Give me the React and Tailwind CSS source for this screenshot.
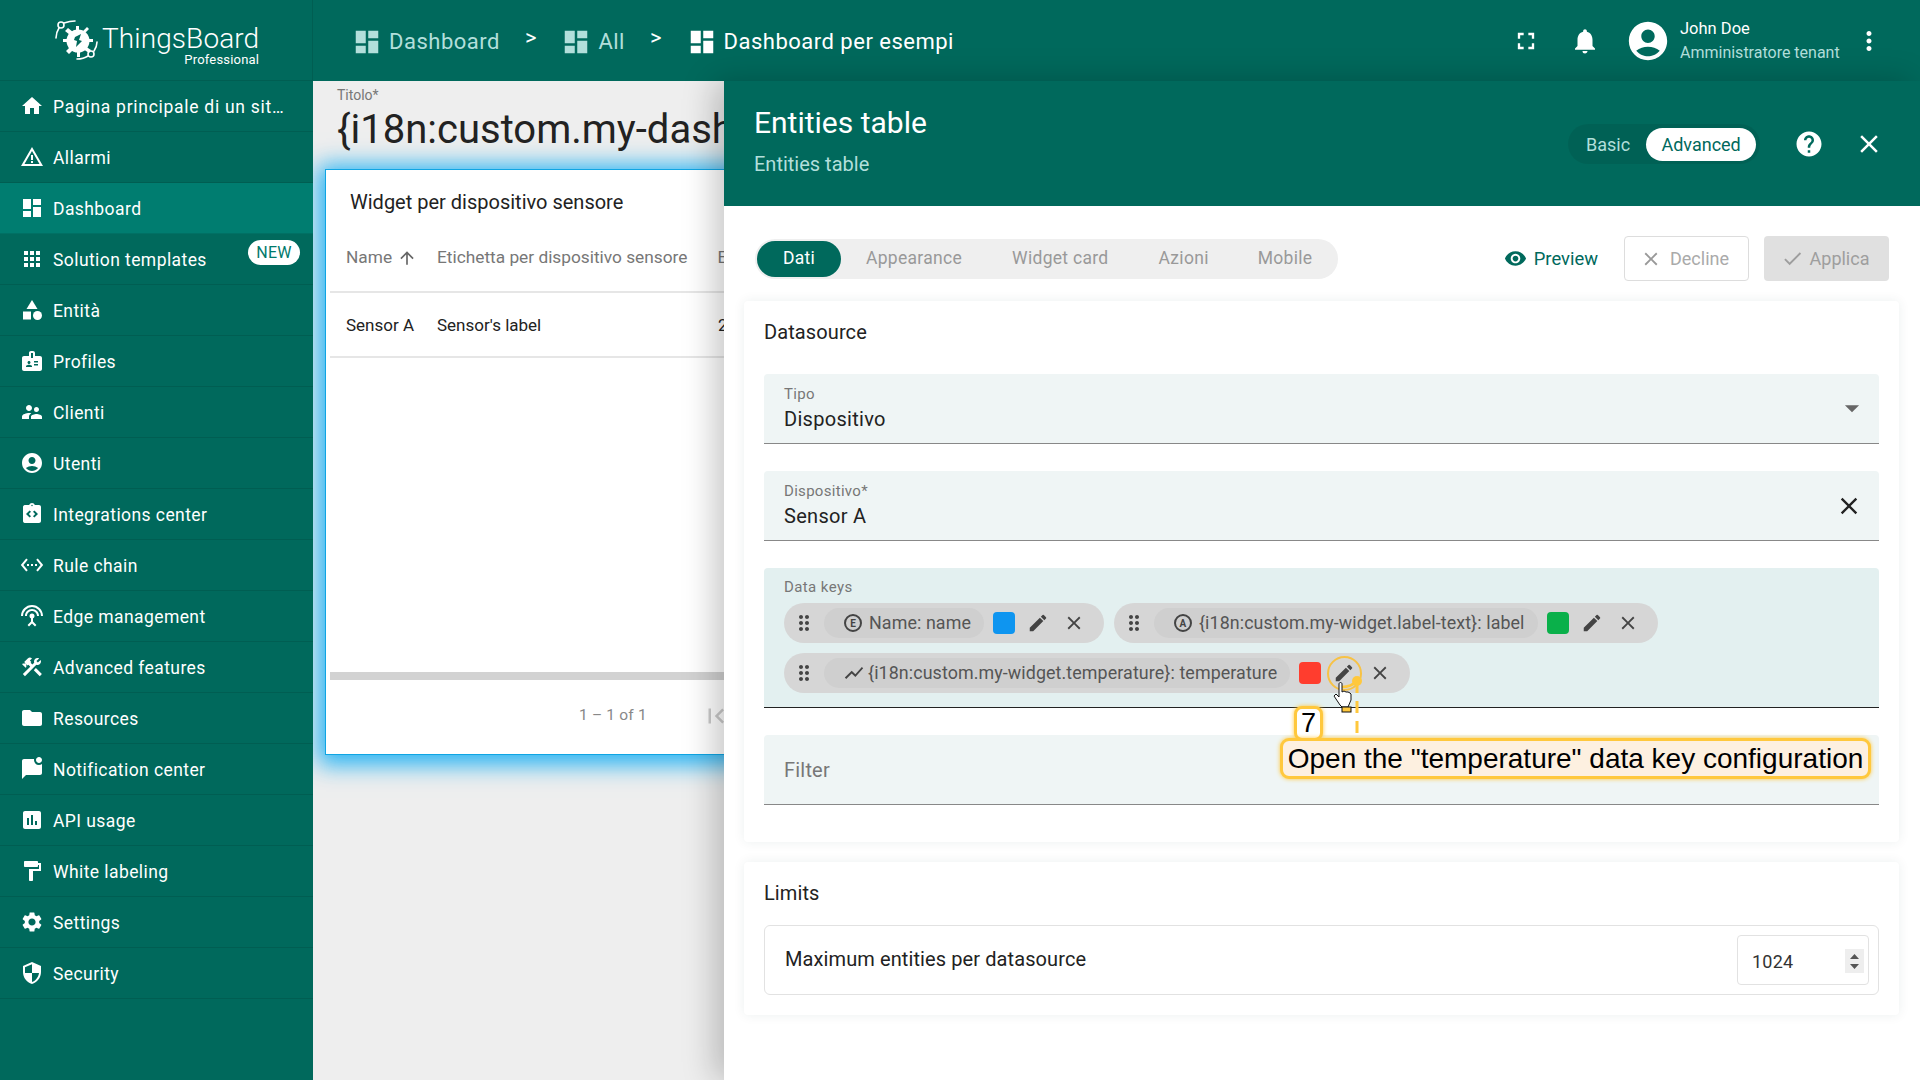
import React from "react";
import {
  MdHome, MdWarningAmber, MdDashboard, MdApps, MdBadge, MdSupervisorAccount, MdAccountCircle, MdIntegrationInstructions,
  MdSettingsEthernet, MdSettingsInputAntenna, MdConstruction, MdFolder, MdMarkChatUnread, MdInsertChart, MdFormatPaint,
  MdSettings, MdSecurity, MdFullscreen, MdNotifications, MdMoreVert, MdHelp, MdClose, MdVisibility, MdCheck,
  MdDragIndicator, MdEdit, MdShowChart, MdArrowUpward, MdArrowDropDown, MdFirstPage, MdCategory,
} from "react-icons/md";

const nav = [
  [MdHome, "Pagina principale di un sit…"],
  [MdWarningAmber, "Allarmi"],
  [MdDashboard, "Dashboard", true],
  [MdApps, "Solution templates", false, true],
  [MdCategory, "Entità"],
  [MdBadge, "Profiles"],
  [MdSupervisorAccount, "Clienti"],
  [MdAccountCircle, "Utenti"],
  [MdIntegrationInstructions, "Integrations center"],
  [MdSettingsEthernet, "Rule chain"],
  [MdSettingsInputAntenna, "Edge management"],
  [MdConstruction, "Advanced features"],
  [MdFolder, "Resources"],
  [MdMarkChatUnread, "Notification center"],
  [MdInsertChart, "API usage"],
  [MdFormatPaint, "White labeling"],
  [MdSettings, "Settings"],
  [MdSecurity, "Security"],
];

function Logo() {
  return (
    <svg width="46" height="46" viewBox="0 0 46 46" fill="none" className="shrink-0">
      <g fill="#fff">
        <circle cx="24" cy="23" r="11.5" />
        <path d="M14 10l5 4-3 3-5-4zM33 9l2 2-5 5-2-2zM9 21h6v3H9zM33 21h6v3h-6zM12 33l5-5 3 3-5 5zM31 28l6 4-2 3-6-4zM22 8h3v5h-3zM23 33h3v6h-3z" />
      </g>
      <path d="M21 19l6-3-2 6 3 1-6 6 1-6-3-1z" fill="#00695c" />
      <g stroke="#fff" strokeWidth="1.6" strokeLinecap="round">
        <circle cx="7" cy="7" r="3" />
        <path d="M10 5c3-1 7-2 11-2M5 10c-2 3-3 6-3 10" />
        <circle cx="37" cy="36" r="3" />
        <path d="M34 38c-3 2-6 3-11 3M40 33c2-3 3-6 3-9" />
      </g>
    </svg>
  );
}

function Sidebar() {
  return (
    <aside className="w-[313px] shrink-0 flex flex-col bg-[#00695c] text-white">
      <div className="h-[81px] shrink-0 flex pl-[54px] pt-[18px] gap-[2px] border-b border-black/10 border-r">
        <Logo />
        <div className="flex flex-col items-end pt-[5px]">
          <div className="text-[28px] leading-[32px] font-light tracking-[0.1px]">ThingsBoard</div>
          <div className="text-[13px] leading-[14px] -mt-[2px] font-normal tracking-[0.2px]">Professional</div>
        </div>
      </div>
      {nav.map(([Icon, label, active, isNew], i) => (
        <div
          key={label}
          className={
            "relative h-[51px] shrink-0 flex items-center pl-[20px] pt-[2px] border-b border-black/10 " +
            (active ? "bg-[#007d70]" : "")
          }
        >
          <Icon size={24} className="shrink-0 -mt-[2px]" />
          <span className={"ml-[9px] text-[17.5px] whitespace-nowrap " + (i === 0 ? "tracking-[0.72px]" : "tracking-[0.42px]")}>{label}</span>
          {isNew && (
            <span className="absolute left-[248px] top-[6px] w-[52px] h-[25px] rounded-full bg-white text-[#00796b] text-[16px] flex items-center justify-center tracking-[0.2px]">
              NEW
            </span>
          )}
        </div>
      ))}
    </aside>
  );
}

function Crumb({ label, bright }) {
  return (
    <div className={"flex items-center gap-[7px] " + (bright ? "text-white" : "text-[#b2dfdb]")}>
      <MdDashboard size={30} className="shrink-0" />
      <span className="text-[22px] tracking-[0.5px] whitespace-nowrap">{label}</span>
    </div>
  );
}

function Header() {
  return (
    <header className="h-[81px] shrink-0 bg-[#00695c] flex items-center pl-[39px] pt-[2px] text-white">
      <Crumb label="Dashboard" />
      <span className="text-[22px] text-white mx-[25px] -mt-[8px]">&gt;</span>
      <Crumb label="All" />
      <span className="text-[22px] text-white mx-[25px] -mt-[8px]">&gt;</span>
      <Crumb label="Dashboard per esempi" bright />
      <div className="flex-1" />
      <MdFullscreen size={28} className="-mt-[2px]" />
      <MdNotifications size={30} className="ml-[30px] -mt-[2px]" />
      <MdAccountCircle size={46} className="ml-[25px] -mt-[2px]" />
      <div className="ml-[9px] w-[170px] -mt-[2px]">
        <div className="text-[16.5px] leading-[24px]">John Doe</div>
        <div className="text-[16px] leading-[24px] text-[#b2dfdb] whitespace-nowrap">Amministratore tenant</div>
      </div>
      <MdMoreVert size={30} className="ml-[4px] mr-[36px] -mt-[2px]" />
    </header>
  );
}

function Dash() {
  return (
    <main className="w-[411px] shrink-0 bg-[#eeeeee] overflow-hidden pl-[12px] pt-[6px]">
      <div className="pl-[12px] text-[14px] leading-[16px] text-[#777]">Titolo*</div>
      <div className="pl-[12px] mt-[3px] text-[40px] leading-[48px] text-[#222] whitespace-nowrap">{"{i18n:custom.my-dashboard}"}</div>
      <div className="mt-[15px] w-[900px] h-[586px] bg-white border border-[#10a5e3] shadow-[0_3px_22px_7px_rgba(3,169,244,0.85)] flex flex-col pl-[4px]">
        <div className="h-[64px] shrink-0 flex items-center pl-[20px] text-[20px] text-[#222]">Widget per dispositivo sensore</div>
        <div className="h-[59px] shrink-0 flex items-center pb-[10px] border-b-2 border-[#e6e6e6] text-[17.3px] text-[#777]">
          <span className="ml-[16px] w-[91px] flex items-center whitespace-nowrap">Name<MdArrowUpward size={20} className="ml-[5px] text-[#666]" /></span>
          <span className="whitespace-nowrap">Etichetta per dispositivo sensore</span>
          <span className="ml-[30px]">E</span>
        </div>
        <div className="h-[65px] shrink-0 flex items-center pt-[2px] border-b-2 border-[#e6e6e6] text-[17px] text-[#222]">
          <span className="ml-[16px] w-[91px] whitespace-nowrap">Sensor A</span>
          <span className="w-[281px] whitespace-nowrap">Sensor's label</span>
          <span>2</span>
        </div>
        <div className="h-[314px] shrink-0" />
        <div className="h-[8px] shrink-0 bg-[#d2d2d2]" />
        <div className="flex-1 flex items-center pb-[2px] text-[15.5px] text-[#888]">
          <span className="ml-[249px] whitespace-nowrap tracking-[0.2px]">1 – 1 of 1</span>
          <MdFirstPage size={30} className="ml-[54px] text-[#ccc]" />
        </div>
      </div>
    </main>
  );
}

function KeyChip({ kind, label, color }) {
  return (
    <div className="h-[40px] flex items-center rounded-full bg-[#d6d6d6] pl-[8px] pr-[13px]">
      <MdDragIndicator size={24} className="text-[#444]" />
      <div className="ml-[8px] h-[30px] rounded-full bg-[#cfcfcf] flex items-center pl-[20px] pr-[13px] text-[17.85px] text-[#555] tracking-[0.1px] whitespace-nowrap">
        {kind === "line" ? (
          <MdShowChart size={22} className="text-[#444] mr-[3px] -ml-[1px]" />
        ) : (
          <span className="w-[18px] h-[18px] mr-[7px] rounded-full border-2 border-[#444] text-[#444] text-[10px] font-bold flex items-center justify-center">{kind}</span>
        )}
        {label}
      </div>
      <div className="ml-[9px] w-[22px] h-[22px] rounded-[4px]" style={{ backgroundColor: color }} />
      <div className="ml-[6px] w-[34px] h-[34px] flex items-center justify-center text-[#444]">
        <MdEdit size={22} />
      </div>
      <div className="ml-[2px] w-[34px] h-[34px] flex items-center justify-center text-[#444]">
        <MdClose size={22} />
      </div>
    </div>
  );
}

function Field({ label, value, right }) {
  return (
    <div className="relative h-[70px] rounded-t-[4px] bg-[#eff5f5] border-b border-[#888] px-[20px] pt-[11px]">
      <div className="text-[15px] leading-[18px] text-[#777] tracking-[0.3px]">{label}</div>
      <div className="text-[20px] leading-[26px] mt-[3px] text-[#222] tracking-[0.3px]">{value}</div>
      {right}
    </div>
  );
}

function Panel() {
  return (
    <section className="flex-1 min-w-0 bg-white flex flex-col shadow-[-10px_0_30px_rgba(0,0,0,0.22)] z-10">
      <div className="h-[125px] shrink-0 bg-[#00695c] flex items-center text-white pl-[30px]">
        <div className="pb-[6px]">
          <div className="text-[30px] leading-[36px]">Entities table</div>
          <div className="text-[20px] leading-[26px] mt-[10px] text-[#b2dfdb]">Entities table</div>
        </div>
        <div className="flex-1" />
        <div className="mt-[1px] h-[40px] w-[192px] rounded-full bg-[#00000012] flex items-center pl-[18px]">
          <span className="text-[18px] text-[#b2dfdb]">Basic</span>
          <span className="ml-[16px] w-[110px] h-[33px] rounded-full bg-white text-[#00695c] text-[18px] flex items-center justify-center">Advanced</span>
        </div>
        <MdHelp size={30} className="ml-[34px]" />
        <MdClose size={30} className="ml-[30px] mr-[36px]" />
      </div>
      <div className="flex-1 pl-[20px] pr-[21px] pt-[30px]">
        <div className="h-[45px] pl-[11px] pr-[10px] flex items-center">
          <div className="h-[40px] flex items-center rounded-full bg-[#efefef] pl-[2px] w-[583px] text-[17.5px] text-[#999] tracking-[0.3px]">
            <span className="w-[84px] h-[36px] rounded-full bg-[#00695c] text-white flex items-center justify-center">Dati</span>
            <span className="ml-[25px] whitespace-nowrap">Appearance</span>
            <span className="ml-[50px] whitespace-nowrap">Widget card</span>
            <span className="ml-[50px]">Azioni</span>
            <span className="ml-[49px]">Mobile</span>
          </div>
          <div className="flex-1" />
          <div className="flex items-center gap-[7px] text-[#00695c] text-[18.4px] mr-[26px]">
            <MdVisibility size={23} /> Preview
          </div>
          <div className="w-[125px] h-[45px] rounded-[4px] border border-[#ddd] flex items-center justify-center text-[18px] text-[#aaa] gap-[8px] pr-[4px]">
            <MdClose size={22} className="text-[#999]" /> Decline
          </div>
          <div className="ml-[15px] w-[125px] h-[45px] rounded-[4px] bg-[#e0e0e0] flex items-center justify-center text-[18px] text-[#9e9e9e] gap-[6px] pr-[3px]">
            <MdCheck size={23} /> Applica
          </div>
        </div>

        <div className="mt-[20px] h-[541px] rounded-[4px] bg-white shadow-[0_0_12px_rgba(0,60,60,0.08)] px-[20px] pt-[20px]">
          <div className="h-[22px] text-[20px] leading-[22px] text-[#222] tracking-[0.1px]">Datasource</div>
          <div className="mt-[31px]">
            <Field label="Tipo" value="Dispositivo" right={<MdArrowDropDown size={34} className="absolute right-[10px] top-[17px] text-[#666]" />} />
          </div>
          <div className="mt-[27px]">
            <Field label="Dispositivo*" value="Sensor A" right={<MdClose size={28} className="absolute right-[16px] top-[21px] text-[#222]" />} />
          </div>
          <div className="mt-[27px] h-[140px] rounded-t-[4px] bg-[#e3f0f0] border-b border-[#222] px-[20px] pt-[10px]">
            <div className="text-[15px] leading-[18px] text-[#777] tracking-[0.4px]">Data keys</div>
            <div className="flex flex-wrap gap-x-[10px] gap-y-[10px] mt-[7px]">
              <KeyChip kind="E" label="Name: name" color="#0e95f0" />
              <KeyChip kind="A" label="{i18n:custom.my-widget.label-text}: label" color="#0ab04a" />
              <KeyChip kind="line" label="{i18n:custom.my-widget.temperature}: temperature" color="#ff3d2e" />
            </div>
          </div>
          <div className="mt-[27px] h-[70px] rounded-t-[4px] bg-[#eff5f5] border-b border-[#888] px-[20px] flex items-center text-[20px] text-[#777] tracking-[0.2px]">Filter</div>
        </div>

        <div className="mt-[20px] h-[153px] rounded-[4px] bg-white shadow-[0_0_12px_rgba(0,60,60,0.08)] px-[20px] pt-[20px]">
          <div className="h-[22px] text-[20px] leading-[22px] text-[#222] tracking-[0.1px]">Limits</div>
          <div className="mt-[21px] h-[70px] rounded-[6px] border border-[#e2e2e2] flex items-center pl-[20px] pr-[9px]">
            <span className="text-[20px] text-[#222] tracking-[0.1px] -mt-[2px]">Maximum entities per datasource</span>
            <div className="ml-auto relative w-[132px] h-[50px] rounded-[4px] border border-[#e2e2e2] flex items-center pl-[14px] pt-[2px] text-[18px] text-[#333] tracking-[0.2px]">
              1024
              <svg className="absolute right-[4px] top-[13px]" width="19" height="24" viewBox="0 0 19 24">
                <rect width="19" height="24" fill="#eeeeee" />
                <path d="M9.5 5l4.5 5H5zM9.5 20l4.5-5H5z" fill="#555" />
              </svg>
            </div>
          </div>
        </div>
      </div>
    </section>
  );
}

function Annotation() {
  return (
    <>
      <div className="absolute z-20 left-[1327px] top-[656px] w-[35px] h-[35px] rounded-full border-2 border-[#f7c245]" />
      <svg className="absolute z-20 left-[1330px] top-[660px]" width="40" height="84" viewBox="0 0 40 84" fill="none">
        <circle cx="27" cy="21" r="5" fill="#ffc83d" />
        <path d="M27 21v57" stroke="#ffc83d" strokeWidth="3" strokeDasharray="12 8" />
        <path d="M12 27c5 0 10-1 15-6" stroke="#ffc83d" strokeWidth="2.5" />
        <path d="M10 45l-6-9 2-2 3 3V24c0-2 3-2 3 0v8l2-1 2 1 2 0 2 1 1 1v6l-3 7H12z" fill="#fff" stroke="#111" strokeWidth="1" />
        <rect x="12" y="47" width="9" height="5" fill="#ffc83d" stroke="#111" strokeWidth="1" />
      </svg>
      <div className="absolute z-20 left-[1294px] top-[706px] w-[29px] h-[35px] rounded-[8px] bg-white border-[3px] border-[#ffc83d] shadow-[0_0_4px_#ffc83d] flex items-center justify-center text-[27px] text-black font-['Liberation_Sans',sans-serif]">
        7
      </div>
      <div className="absolute z-20 left-[1280px] top-[738px] w-[591px] h-[41px] rounded-[9px] bg-[#fdf0e0] border-[3px] border-[#ffc83d] shadow-[0_0_4px_#ffc83d] flex items-center justify-center pt-[1px] text-[28px] text-black whitespace-nowrap font-['Liberation_Sans',sans-serif]">
        Open the "temperature" data key configuration
      </div>
    </>
  );
}

export default function App() {
  return (
    <div className="relative w-[1920px] h-[1080px] overflow-hidden flex bg-[#eeeeee] font-['Roboto',sans-serif]">
      <Sidebar />
      <div className="flex-1 min-w-0 flex flex-col">
        <Header />
        <div className="flex-1 min-h-0 flex">
          <Dash />
          <Panel />
        </div>
      </div>
      <Annotation />
    </div>
  );
}
